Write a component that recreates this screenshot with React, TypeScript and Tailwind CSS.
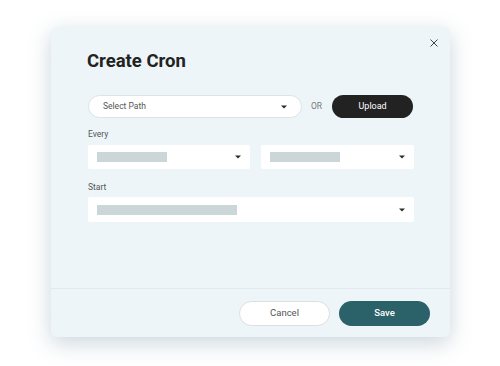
import React from "react";

function Caret() {
  return (
    <svg width="6" height="4" viewBox="0 0 6 4" className="shrink-0">
      <path d="M0 0.5 L6 0.5 L3 3.5 Z" fill="#2b2b2b" />
    </svg>
  );
}

function BoxSelect({ bar, className }: { bar: number; className?: string }) {
  return (
    <div
      className={
        "flex items-center justify-between bg-white rounded-[2px] pl-[9px] pr-[9px] " +
        (className ?? "")
      }
    >
      <div className="h-[10px] bg-[#cad6d8]" style={{ width: bar }} />
      <Caret />
    </div>
  );
}

export default function App() {
  return (
    <div
      className="w-[500px] h-[366px] bg-white overflow-hidden pt-[27px] pl-[51px]"
      style={{ fontFamily: "Roboto, 'Liberation Sans', sans-serif" }}
    >
      <div className="relative w-[399px] h-[310px] bg-[#edf5f8] rounded-[6px] shadow-[0_6px_22px_rgba(70,105,125,0.28)] flex flex-col">
        <button className="absolute top-[12px] right-[12px] w-[8px] h-[8px] flex items-center justify-center">
          <svg width="8" height="8" viewBox="0 0 8 8">
            <path d="M0.5 0.5 L7.5 7.5 M7.5 0.5 L0.5 7.5" stroke="#444" strokeWidth="1" />
          </svg>
        </button>
        <div className="flex-1 pl-[37px] pr-[36px] pt-[20px]">
          <h2 className="-ml-[1px] text-[18.5px] leading-[28px] font-bold text-[#222]">
            Create Cron
          </h2>
          <div className="mt-[20px] flex items-center h-[23px]">
            <div className="w-[214px] h-full bg-white rounded-full border border-[#dbe3e6] flex items-center justify-between pl-[14px] pr-[14px]">
              <span className="text-[8.5px] text-[#555]">Select Path</span>
              <Caret />
            </div>
            <span className="ml-[9px] text-[8.5px] text-[#777]">OR</span>
            <button className="ml-[10px] w-[81px] h-full rounded-full bg-[#222] text-white text-[9px] flex items-center justify-center">
              Upload
            </button>
          </div>
          <div className="mt-[10px] text-[8.5px] leading-[12px] text-[#555]">Every</div>
          <div className="mt-[5px] flex gap-[11px]">
            <BoxSelect bar={70} className="w-[162px] h-[24px]" />
            <BoxSelect bar={70} className="w-[153px] h-[24px]" />
          </div>
          <div className="mt-[12px] text-[8.5px] leading-[12px] text-[#555]">Start</div>
          <div className="mt-[4px]">
            <BoxSelect bar={140} className="w-[326px] h-[25px]" />
          </div>
        </div>
        <div className="h-[49px] border-t border-[#e0e9ec] flex items-center justify-end gap-[9px] pr-[20px]">
          <button className="w-[91px] h-[25px] rounded-full bg-white border border-[#dcdfe0] text-[9.5px] text-[#555] flex items-center justify-center">
            Cancel
          </button>
          <button className="w-[91px] h-[25px] rounded-full bg-[#2b6169] text-[9.5px] text-white font-medium flex items-center justify-center">
            Save
          </button>
        </div>
      </div>
    </div>
  );
}
